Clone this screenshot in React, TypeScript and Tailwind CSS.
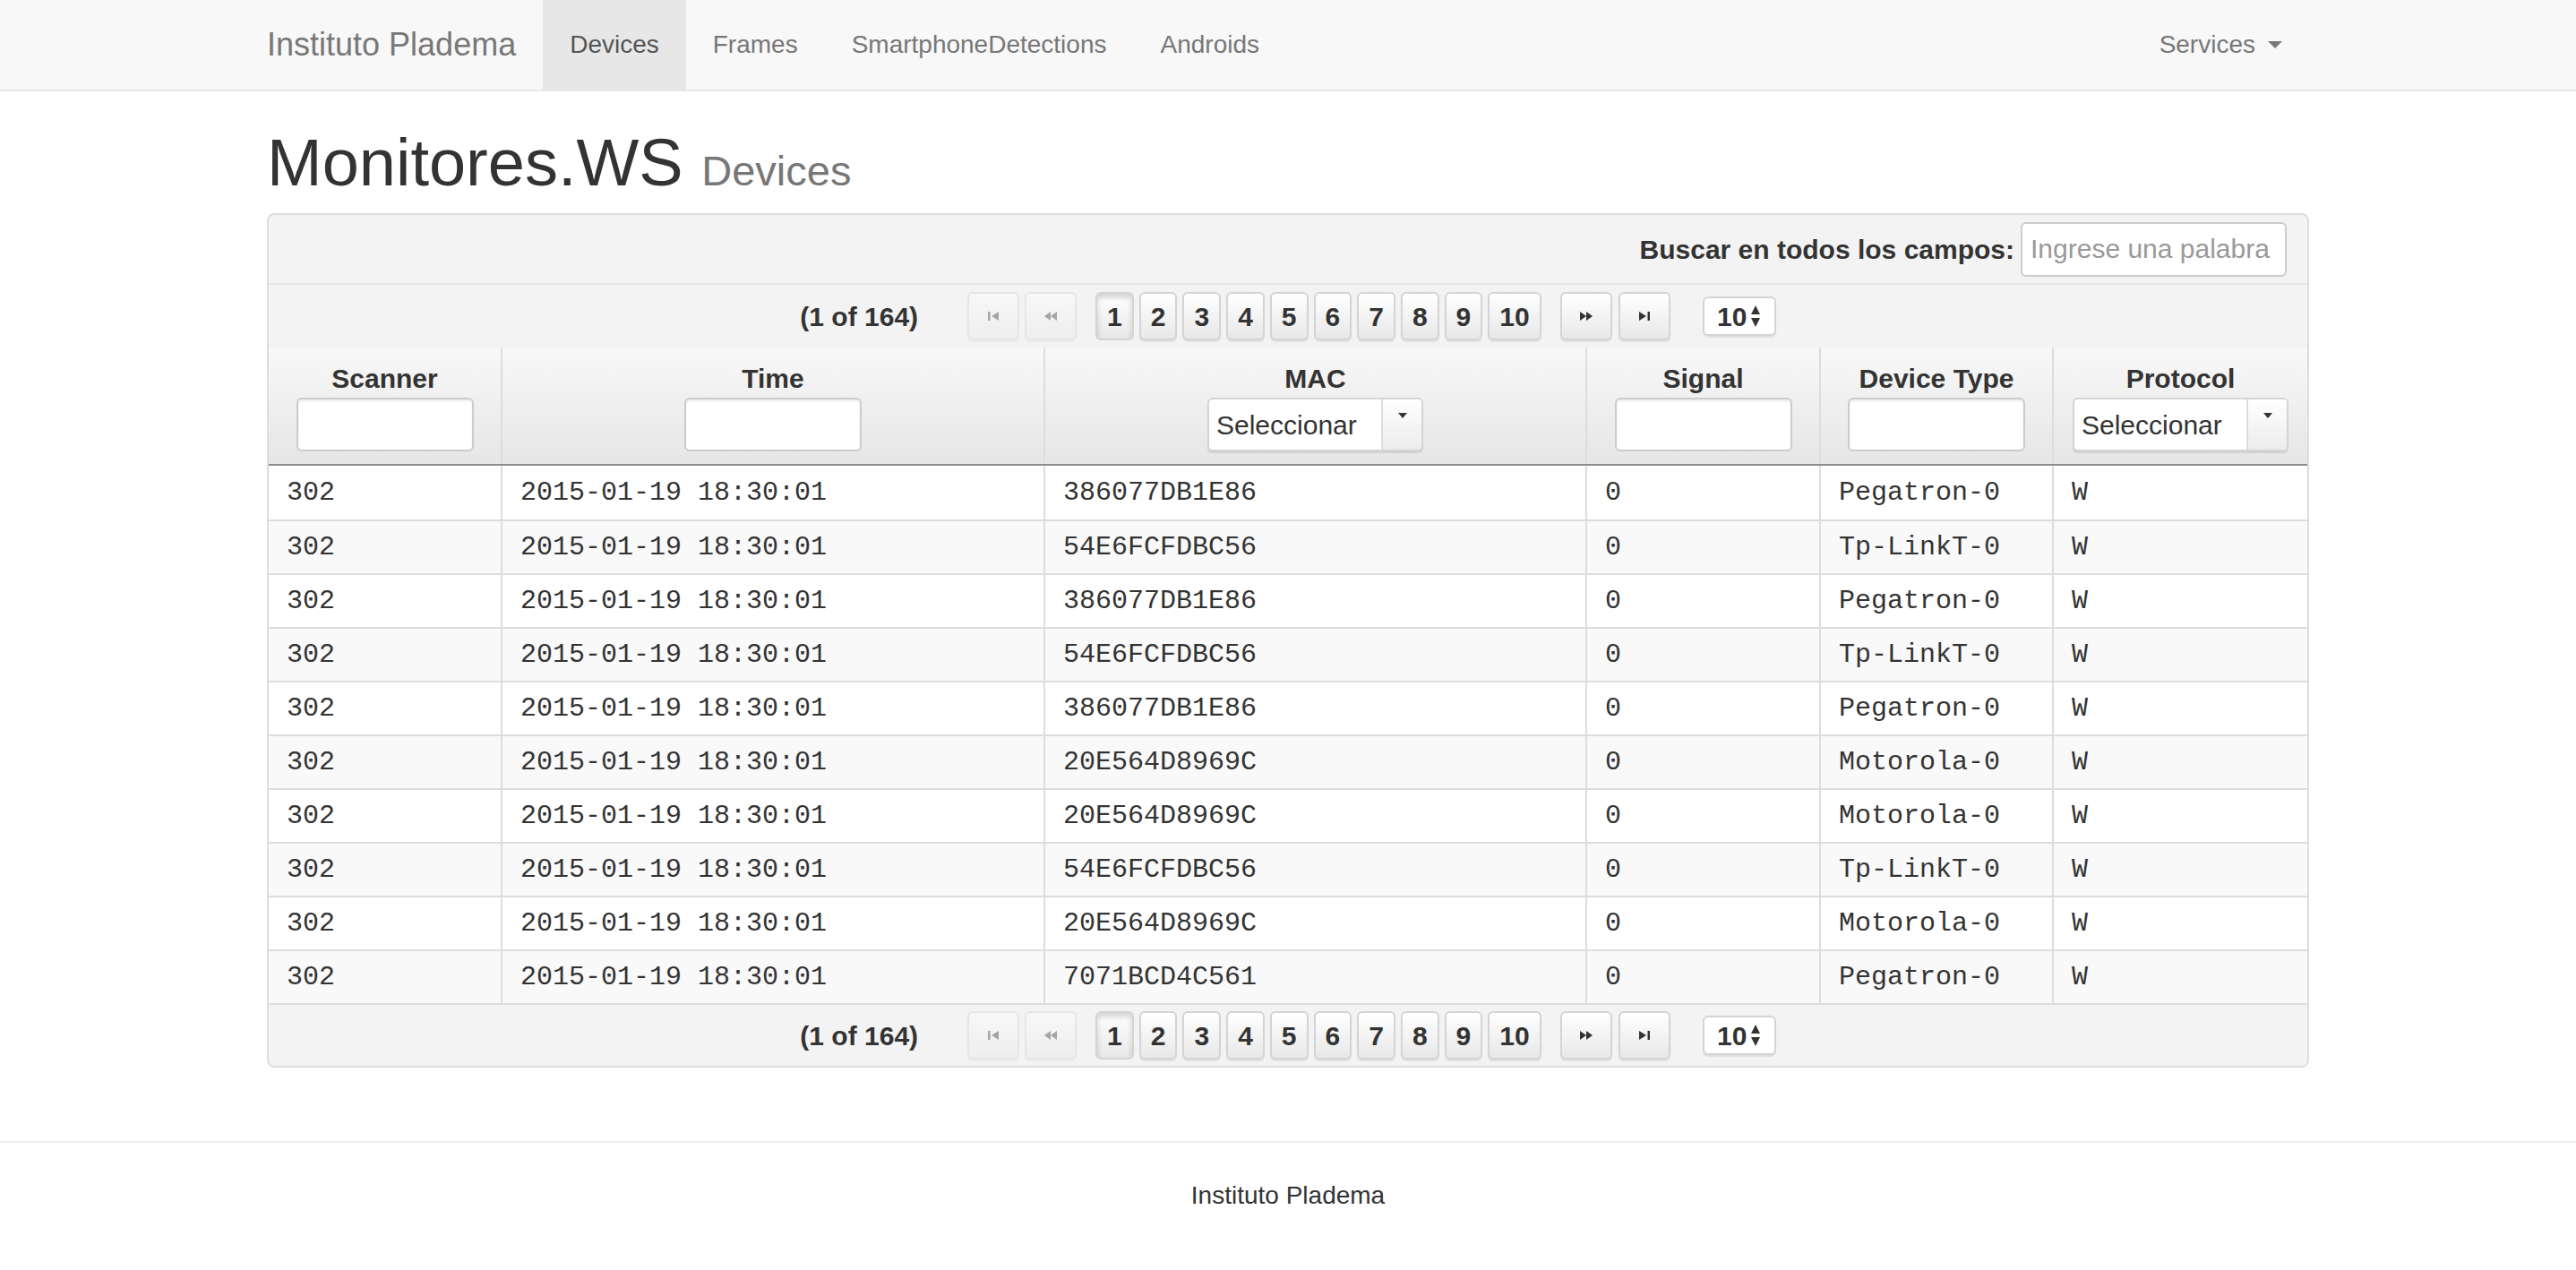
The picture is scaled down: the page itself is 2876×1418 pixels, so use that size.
import { useState } from "react";

const navLinks = ["Devices", "Frames", "SmartphoneDetections", "Androids"];

const rows = [
  { mac: "386077DB1E86", type: "Pegatron-0" },
  { mac: "54E6FCFDBC56", type: "Tp-LinkT-0" },
  { mac: "386077DB1E86", type: "Pegatron-0" },
  { mac: "54E6FCFDBC56", type: "Tp-LinkT-0" },
  { mac: "386077DB1E86", type: "Pegatron-0" },
  { mac: "20E564D8969C", type: "Motorola-0" },
  { mac: "20E564D8969C", type: "Motorola-0" },
  { mac: "54E6FCFDBC56", type: "Tp-LinkT-0" },
  { mac: "20E564D8969C", type: "Motorola-0" },
  { mac: "7071BCD4C561", type: "Pegatron-0" },
];

const cols = "grid grid-cols-[259px_606px_605px_261px_260px_1fr]";
const btn =
  "flex h-[54px] items-center justify-center rounded-[6px] border-2 border-[#d4d4d4] bg-linear-to-b from-white to-[#e8e8e8] shadow-[0_2px_1px_rgba(0,0,0,0.08)]";

function SeekIcon({ kind }: { kind: "first" | "prev" | "next" | "last" }) {
  return (
    <svg width="18" height="12" viewBox="0 0 18 12" fill="currentColor">
      {kind === "first" && (
        <>
          <rect x="3" y="1" width="2.5" height="10" />
          <path d="M15 1 L7 6 L15 11 Z" />
        </>
      )}
      {kind === "prev" && (
        <>
          <path d="M9 1 L2 6 L9 11 Z" />
          <path d="M16 1 L9 6 L16 11 Z" />
        </>
      )}
      {kind === "next" && (
        <>
          <path d="M2 1 L9 6 L2 11 Z" />
          <path d="M9 1 L16 6 L9 11 Z" />
        </>
      )}
      {kind === "last" && (
        <>
          <path d="M3 1 L11 6 L3 11 Z" />
          <rect x="12.5" y="1" width="2.5" height="10" />
        </>
      )}
    </svg>
  );
}

function Paginator({ top }: { top?: boolean }) {
  const [page, setPage] = useState(1);
  return (
    <div
      className={`flex h-[70px] items-center justify-center bg-[#f3f3f3] ${
        top ? "" : "border-t-2 border-[#dddddd]"
      }`}
    >
      <span className="mr-[55px] text-[30px] font-bold text-[#333]">(1 of 164)</span>
      <div className="flex gap-[6px] text-[#333] opacity-40">
        <button type="button" className={`${btn} w-[58px]`}>
          <SeekIcon kind="first" />
        </button>
        <button type="button" className={`${btn} w-[58px]`}>
          <SeekIcon kind="prev" />
        </button>
      </div>
      <div className="ml-[21px] flex gap-[6px]">
        {[1, 2, 3, 4, 5, 6, 7, 8, 9, 10].map((n) => (
          <button
            key={n}
            type="button"
            onClick={() => setPage(n)}
            className={`${btn} px-[11px] text-[30px] font-bold text-[#333] ${
              page === n ? "from-[#dcdcdc] to-[#e6e6e6] shadow-[inset_0_4px_6px_rgba(0,0,0,0.18)]" : ""
            }`}
          >
            {n}
          </button>
        ))}
      </div>
      <div className="ml-[21px] flex gap-[7px] text-[#333]">
        <button type="button" className={`${btn} w-[58px]`}>
          <SeekIcon kind="next" />
        </button>
        <button type="button" className={`${btn} w-[58px]`}>
          <SeekIcon kind="last" />
        </button>
      </div>
      <div className="ml-[36px] flex h-[44px] w-[82px] items-center justify-center gap-[4px] rounded-[6px] border-2 border-[#d4d4d4] bg-white shadow-[0_2px_1px_rgba(0,0,0,0.08)]">
        <span className="text-[30px] font-bold text-[#333]">10</span>
        <svg width="12" height="26" viewBox="0 0 12 26" fill="#333">
          <path d="M6 1 L11 11 L1 11 Z" />
          <path d="M1 15 L11 15 L6 25 Z" />
        </svg>
      </div>
    </div>
  );
}

function FilterInput() {
  return (
    <input
      type="text"
      className="h-[60px] w-[198px] rounded-[6px] border-2 border-[#cccccc] bg-white shadow-[inset_0_2px_2px_rgba(0,0,0,0.075)] outline-none"
    />
  );
}

function FilterSelect() {
  return (
    <div className="flex h-[60px] w-[241px] overflow-hidden rounded-[6px] border-2 border-[#d4d4d4] bg-white shadow-[0_2px_1px_rgba(0,0,0,0.1)]">
      <span className="flex flex-1 items-center pl-[8px] text-[30px] font-normal text-[#333]">Seleccionar</span>
      <span className="flex w-[45px] items-start justify-center border-l-2 border-[#dddddd] bg-linear-to-b from-white to-[#ececec] pt-[14px]">
        <svg width="12" height="8" viewBox="0 0 12 8" fill="#333">
          <path d="M1 1 L11 1 L6 7 Z" />
        </svg>
      </span>
    </div>
  );
}

const headers: { label: string; filter: "input" | "select" }[] = [
  { label: "Scanner", filter: "input" },
  { label: "Time", filter: "input" },
  { label: "MAC", filter: "select" },
  { label: "Signal", filter: "input" },
  { label: "Device Type", filter: "input" },
  { label: "Protocol", filter: "select" },
];

export default function App() {
  return (
    <div className="min-h-screen bg-white font-['Liberation_Sans',Arial,sans-serif] text-[#333]">
      <nav className="h-[102px] border-b-2 border-[#e7e7e7] bg-[#f8f8f8]">
        <div className="mx-auto flex h-[100px] w-[2340px] px-[30px]">
          <a href="#" className="flex items-center pr-[30px] text-[36px] text-[#777]">
            Instituto Pladema
          </a>
          <ul className="flex">
            {navLinks.map((link, i) => (
              <li key={link}>
                <a
                  href="#"
                  className={`flex h-full items-center px-[30px] text-[28px] ${
                    i === 0 ? "bg-[#e7e7e7] text-[#555]" : "text-[#777]"
                  }`}
                >
                  {link}
                </a>
              </li>
            ))}
          </ul>
          <a href="#" className="ml-auto flex items-center px-[30px] text-[28px] text-[#777]">
            Services
            <span className="ml-[14px] h-0 w-0 border-x-[8px] border-t-[8px] border-x-transparent border-t-[#777]" />
          </a>
        </div>
      </nav>

      <main className="mx-auto w-[2340px] px-[30px] pt-[40px]">
        <h1 className="mb-[17px] h-[79px] text-[74px] leading-[79px] font-normal text-[#333]">
          Monitores.WS <small className="text-[47px] leading-none text-[#777]">Devices</small>
        </h1>

        <div className="overflow-hidden rounded-[8px] border-2 border-[#dddddd] bg-[#f3f3f3]">
          <div className="flex h-[78px] items-center justify-end border-b-2 border-[#e6e6e6] pr-[23px]">
            <label className="mr-[7px] text-[30px] font-bold text-[#333]">Buscar en todos los campos:</label>
            <input
              type="text"
              placeholder="Ingrese una palabra"
              className="h-[61px] w-[297px] rounded-[6px] border-2 border-[#cccccc] bg-white pl-[9px] text-[30px] text-[#333] outline-none placeholder:text-[#999]"
            />
          </div>

          <Paginator top />

          <div className={`${cols} h-[132px] border-b-2 border-[#8c8c8c]`}>
            {headers.map((h, i) => (
              <div
                key={h.label}
                className={`flex flex-col items-center justify-center gap-[4px] bg-linear-to-b from-[#f8f8f8] to-[#e6e6e6] pt-[4px] ${
                  i > 0 ? "border-l-2 border-[#dddddd]" : ""
                }`}
              >
                <span className="text-[30px] leading-[34px] font-bold text-[#333]">{h.label}</span>
                {h.filter === "input" ? <FilterInput /> : <FilterSelect />}
              </div>
            ))}
          </div>

          <div className="font-['Liberation_Mono','Courier_New',monospace] text-[30px] text-[#333]">
            {rows.map((r, i) => (
              <div
                key={i}
                className={`${cols} h-[60px] ${i > 0 ? "border-t-2 border-[#dddddd]" : ""} ${
                  i % 2 === 1 ? "bg-[#f9f9f9]" : "bg-white"
                }`}
              >
                {["302", "2015-01-19 18:30:01", r.mac, "0", r.type, "W"].map((v, j) => (
                  <div
                    key={j}
                    className={`flex items-center pl-[20px] ${j > 0 ? "border-l-2 border-[#dddddd]" : ""}`}
                  >
                    {v}
                  </div>
                ))}
              </div>
            ))}
          </div>

          <Paginator />
        </div>
      </main>

      <footer className="mt-[82px] border-t-2 border-[#eeeeee]">
        <div className="flex h-[118px] items-center justify-center text-[28px] text-[#333]">Instituto Pladema</div>
      </footer>
    </div>
  );
}
